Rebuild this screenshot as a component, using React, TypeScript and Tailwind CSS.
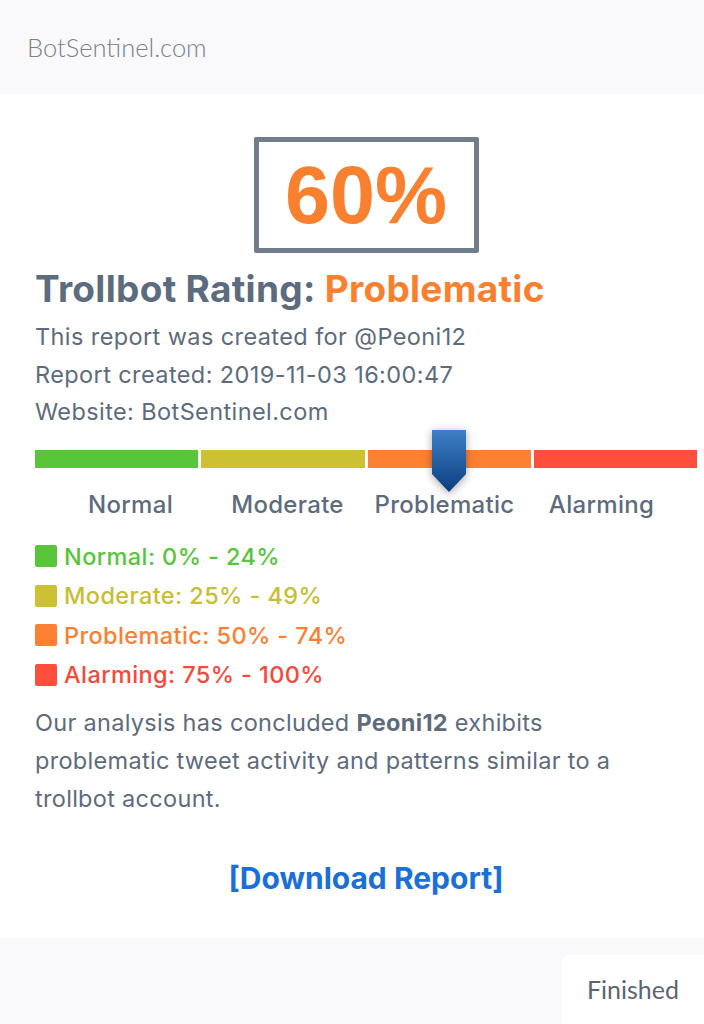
import React from 'react'

const segments = [
  { name: 'Normal', color: 'bg-[#58c63a]' },
  { name: 'Moderate', color: 'bg-[#cbc133]' },
  { name: 'Problematic', color: 'bg-[#fe8133]' },
  { name: 'Alarming', color: 'bg-[#fe4e3c]' },
]

const legend = [
  { label: 'Normal: 0% - 24%', box: 'bg-[#58c63a]', text: 'text-[#58c63a]' },
  { label: 'Moderate: 25% - 49%', box: 'bg-[#cbc133]', text: 'text-[#c8be33]' },
  { label: 'Problematic: 50% - 74%', box: 'bg-[#fe8133]', text: 'text-[#fb7f33]' },
  { label: 'Alarming: 75% - 100%', box: 'bg-[#fe4e3c]', text: 'text-[#f54a3a]' },
]

const App: React.FC = () => {
  return (
    <div className="w-[704px] h-[1024px] flex flex-col bg-white font-['Inter',sans-serif] text-[#5d6b7d]">
      {/* header */}
      <header className="h-[94px] shrink-0 bg-[#f9f9fb] flex items-center px-[27px]">
        <span className="font-['Lato',sans-serif] font-light text-[25.5px] text-[#7b818a]">BotSentinel.com</span>
      </header>

      {/* report body */}
      <main className="flex-1 pl-[35px] pr-[7px] pt-[43px]">
        <div className="flex justify-center">
          <div className="w-[225px] h-[116px] border-[5px] border-[#717d8d] rounded-[2px] flex items-center justify-center">
            <span className="font-['Liberation_Sans',sans-serif] font-bold text-[81px] leading-none text-[#f9802e]">60%</span>
          </div>
        </div>

        <h1 className="mt-[16px] text-[37px] leading-[40px] font-bold tracking-[0.3px] text-[#5c6b7e]">
          Trollbot Rating: <span className="text-[#f9802e]">Problematic</span>
        </h1>

        <div className="mt-[9px] text-[23.5px] leading-[37.5px] tracking-[0.4px]">
          <p>This report was created for @Peoni12</p>
          <p>Report created: 2019-11-03 16:00:47</p>
          <p>Website: BotSentinel.com</p>
        </div>

        {/* scale */}
        <div className="relative mt-[19px]">
          <div className="flex gap-[3px] h-[18px]">
            {segments.map((s) => (
              <div key={s.name} className={`flex-1 ${s.color}`} />
            ))}
          </div>
          <svg
            className="absolute left-[397px] top-[-20px] drop-shadow-[0_2px_4px_rgba(0,0,0,0.35)]"
            width="34"
            height="62"
            viewBox="0 0 34 62"
          >
            <defs>
              <linearGradient id="mk" x1="0" y1="0" x2="0" y2="1">
                <stop offset="0" stopColor="#3e80c6" />
                <stop offset="1" stopColor="#0b3d80" />
              </linearGradient>
            </defs>
            <path d="M0 0 H34 V44 L17 62 L0 44 Z" fill="url(#mk)" />
          </svg>
          <div className="ml-[17px] mt-[21px] grid grid-cols-[157px_157px_157px_157px] text-[24px] font-medium leading-[32px] tracking-[0.3px] text-center">
            {segments.map((s) => (
              <span key={s.name}>{s.name}</span>
            ))}
          </div>
        </div>

        {/* legend */}
        <ul className="mt-[16px] flex flex-col">
          {legend.map((l) => (
            <li key={l.label} className="flex items-center h-[39.5px]">
              <span className={`w-[22px] h-[22px] rounded-[2px] ${l.box}`} />
              <span className={`ml-[7px] text-[23.5px] font-medium tracking-[0.4px] ${l.text}`}>{l.label}</span>
            </li>
          ))}
        </ul>

        <p className="mt-[9px] max-w-[625px] text-[23.5px] leading-[38px] tracking-[0.3px]">
          Our analysis has concluded <b className="font-bold">Peoni12</b> exhibits problematic tweet activity and patterns similar to a trollbot account.
        </p>

        <div className="mt-[38px] text-center">
          <a className="text-[30px] font-bold text-[#1a6fd8]">[Download Report]</a>
        </div>
      </main>

      {/* footer */}
      <footer className="h-[86px] shrink-0 bg-[#f9f9fb] flex justify-end items-end">
        <div className="w-[142px] h-[69px] bg-white rounded-tl-[6px] flex items-center justify-center font-['Lato',sans-serif] text-[25px] text-[#5d6470]">
          Finished
        </div>
      </footer>
    </div>
  )
}

export default App
